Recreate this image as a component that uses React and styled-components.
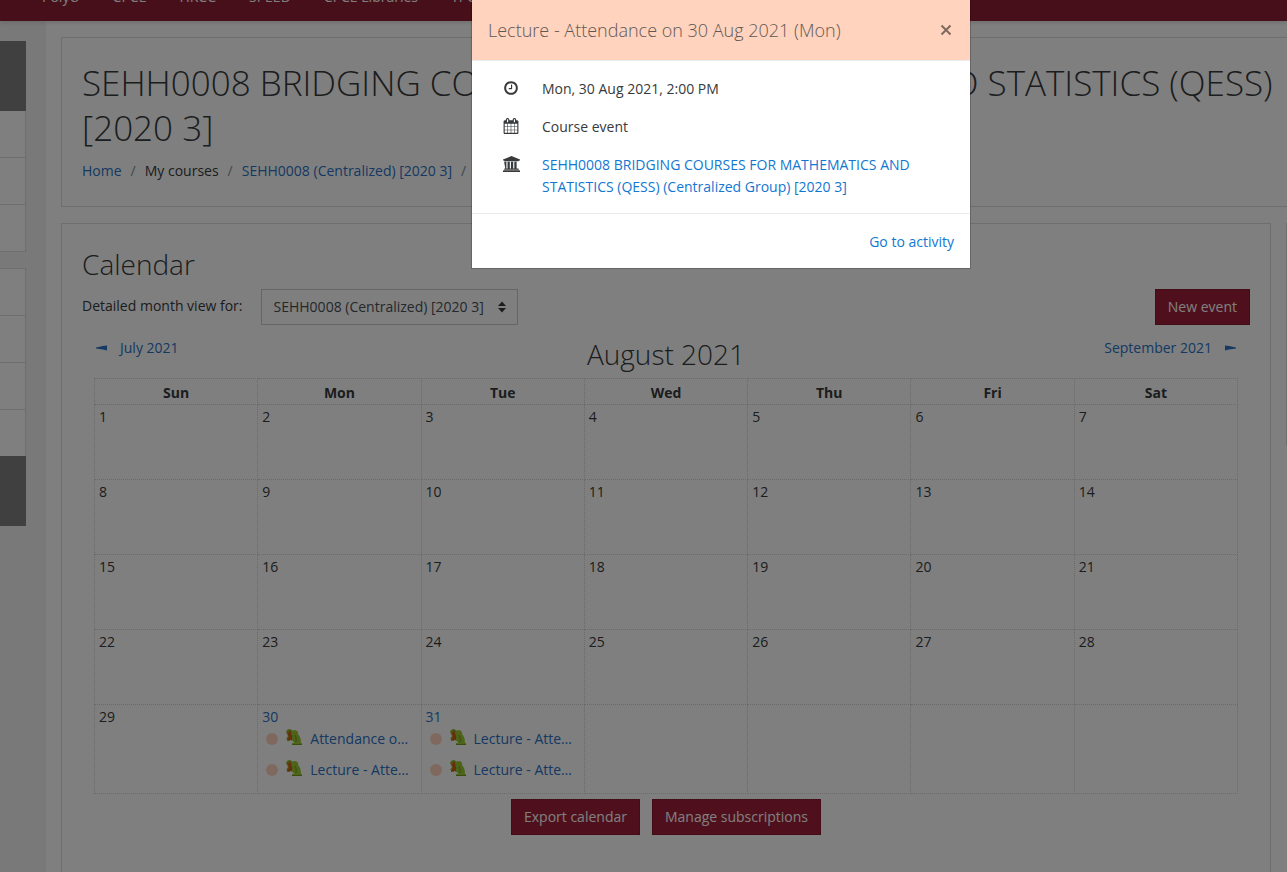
import React from 'react';
import styled, { createGlobalStyle } from 'styled-components';

const GlobalStyle = createGlobalStyle`
  * {
    box-sizing: border-box;
  }

  body {
    margin: 0;
    overflow-x: hidden;
    background-color: #ffffff;
    color: #373a3c;
    font-family: 'Open Sans', 'Segoe UI', sans-serif;
    font-size: 14px;
    line-height: 22px;
  }

  a {
    color: #1177d1;
    text-decoration: none;
  }
`;

const Page = styled.div`
  min-height: 100vh;
  display: flex;
  flex-direction: column;
  overflow: hidden;

  a {
    color: #2a72c4;
  }
`;

const Nav = styled.nav`
  height: 50px;
  margin-top: -29px;
  padding: 15px 0 0 42px;
  display: flex;
  flex-shrink: 0;
  gap: 33px;
  background-color: #8f1f35;
  box-shadow: 0 2px 4px rgba(0, 0, 0, 0.12);
  z-index: 1;

  a {
    color: white;
    white-space: nowrap;
  }
`;

const Layout = styled.div`
  flex: 1;
  display: flex;
`;

const Drawer = styled.aside`
  width: 46px;
  flex-shrink: 0;
  padding: 20px 20px 0 0;
  background-color: #f2f2f2;
`;

const DrawerItem = styled.li`
  height: ${(props) => (props.$active ? '70px' : '47px')};
  background-color: ${(props) => (props.$active ? '#808080' : '#ffffff')};
  border: 0 solid ${(props) => (props.$active ? '#808080' : '#dddddd')};
  border-right-width: 1px;
`;

const DrawerGroup = styled.ul`
  list-style: none;
  margin: 0 0 16px;
  padding: 0;

  ${DrawerItem} {
    border-${(props) => props.$lines}-width: 1px;
  }
`;

const Content = styled.div`
  flex: 1;
  min-width: 0;
  padding: 16px 0 0 15px;
  display: flex;
  flex-direction: column;
  gap: 16px;
`;

const Card = styled.section`
  border: 1px solid #dddddd;
  padding: 20px;
`;

/* runs on past the right edge, above the side blocks */
const HeaderCard = styled(Card)`
  width: calc(100% + 30px);
  height: 170px;
`;

const CourseTitle = styled.h1`
  margin: 2px 0 10px;
  font-size: 35px;
  line-height: 45px;
  font-weight: 300;
`;

const Breadcrumb = styled.ol`
  list-style: none;
  display: flex;
  margin: 0;
  padding: 0;
`;

const Crumb = styled.li`
  &::after {
    content: '/';
    padding: 0 9px;
    color: #868e96;
  }
`;

/* the side blocks hang over the right edge of the window */
const Columns = styled.div`
  flex: 1;
  display: flex;
  gap: 15px;
  margin-right: -239px;
`;

const CalendarCard = styled(Card)`
  flex: 1;
  min-width: 0;
  border-bottom: 0;
`;

const SideBlock = styled(Card)`
  width: 240px;
  height: 222px;
  flex-shrink: 0;
`;

const Heading = styled.h2`
  margin: 2px 0 7px;
  font-size: 28px;
  line-height: 36px;
  font-weight: 300;
`;

const Toolbar = styled.div`
  display: flex;
  align-items: center;
`;

const FilterLabel = styled.label`
  margin-right: 18px;
  padding-bottom: 2px;
`;

const SelectBox = styled.div`
  position: relative;
  margin-right: auto;

  svg {
    position: absolute;
    right: 12px;
    top: 12px;
    pointer-events: none;
  }
`;

const Select = styled.select`
  appearance: none;
  height: 36px;
  padding: 0 32px 0 12px;
  border: 1px solid #cccccc;
  border-radius: 0;
  background: #ffffff;
  color: #495057;
  font: inherit;
`;

const Button = styled.button`
  height: 36px;
  padding: 0 12px;
  border: 1px solid #861a2f;
  background-color: #a01f38;
  color: white;
  font: inherit;
`;

const Month = styled.div`
  padding: 0 12px;
`;

const MonthNav = styled.div`
  display: grid;
  grid-template-columns: 1fr auto 1fr;
  height: 53px;
  padding-top: 12px;
`;

const MonthLink = styled.a`
  display: flex;
  align-items: center;
  gap: 13px;
  height: 22px;
  padding: 0 2px;
  justify-self: ${(props) => (props.$end ? 'end' : 'start')};
`;

const MonthTitle = styled.h2`
  margin: 0;
  font-size: 28px;
  line-height: 34px;
  font-weight: 300;
`;

const Table = styled.table`
  width: 100%;
  table-layout: fixed;
  border-collapse: collapse;
`;

const DayName = styled.th`
  height: 26px;
  padding: 2px 0 0;
  border: 1px dotted #d4d4d4;
  font-weight: 700;
`;

const Day = styled.td`
  height: ${(props) => (props.$tall ? '89px' : '75px')};
  padding: 1px 4px;
  border: 1px dotted #d4d4d4;
  vertical-align: top;
`;

const EventList = styled.ul`
  list-style: none;
  margin: 0;
  padding: 0 4px;
`;

const Event = styled.li`
  height: 31px;
`;

const EventLink = styled.a`
  display: flex;
  align-items: center;
  gap: 8px;

  svg {
    flex-shrink: 0;
    margin-bottom: 4px;
  }
`;

const EventDot = styled.span`
  width: 12px;
  height: 12px;
  flex-shrink: 0;
  border-radius: 50%;
  background-color: #ffd3bd;
`;

const EventName = styled.span`
  overflow: hidden;
  text-overflow: ellipsis;
  white-space: nowrap;
`;

const Actions = styled.div`
  display: flex;
  justify-content: center;
  gap: 12px;
  padding: 5px 0 16px;
`;

const Backdrop = styled.div`
  position: fixed;
  inset: 0;
  z-index: 10;
  display: flex;
  justify-content: center;
  align-items: flex-start;
  padding-left: 155px;
  background-color: rgba(0, 0, 0, 0.5);
`;

const Modal = styled.div`
  width: 500px;
  border: 1px solid rgba(0, 0, 0, 0.2);
  border-top: 0;
  background-color: #ffffff;
  background-clip: padding-box;
`;

const ModalHeader = styled.header`
  height: 61px;
  padding: 0 16px;
  display: flex;
  align-items: center;
  justify-content: space-between;
  border-bottom: 1px solid #e9ecef;
  background-color: #ffd3bd;
`;

const ModalTitle = styled.h3`
  margin: 0;
  font-size: 18px;
  line-height: 28px;
  font-weight: 300;
  opacity: 0.8;
`;

const CloseButton = styled.button`
  display: flex;
  padding: 2px;
  border: 0;
  background: none;
  color: #7f695e;
`;

const ModalBody = styled.div`
  display: grid;
  gap: 16px;
  padding: 17px 16px 15px;
`;

const Detail = styled.div`
  display: grid;
  grid-template-columns: 46px 1fr;
  gap: 8px;

  svg {
    justify-self: center;
    margin-top: 2px;
  }
`;

const ModalFooter = styled.footer`
  display: flex;
  justify-content: flex-end;
  padding: 17px 16px 15px;
  border-top: 1px solid #e9ecef;
`;

const ClockIcon = () => (
  <svg width="16" height="16" viewBox="0 0 1792 1792" fill="currentColor">
    <path d="M1024 544v448q0 14-9 23t-23 9h-320q-14 0-23-9t-9-23v-64q0-14 9-23t23-9h224v-352q0-14 9-23t23-9h64q14 0 23 9t9 23zm416 352q0-148-73-273t-198-198-273-73-273 73-198 198-73 273 73 273 198 198 273 73 273-73 198-198 73-273zm224 0q0 209-103 385.5t-279.5 279.5-385.5 103-385.5-103-279.5-279.5-103-385.5 103-385.5 279.5-279.5 385.5-103 385.5 103 279.5 279.5 103 385.5z" />
  </svg>
);

const CalendarIcon = () => (
  <svg width="16" height="16" viewBox="0 0 1792 1792" fill="currentColor">
    <path d="M192 1664h288v-288h-288v288zm352 0h320v-288h-320v288zm-352-352h288v-320h-288v320zm352 0h320v-320h-320v320zm-352-384h288v-288h-288v288zm736 736h320v-288h-320v288zm-384-736h320v-288h-320v288zm768 736h288v-288h-288v288zm-384-352h320v-320h-320v320zm-352-864v-288q0-13-9.5-22.5t-22.5-9.5h-64q-13 0-22.5 9.5t-9.5 22.5v288q0 13 9.5 22.5t22.5 9.5h64q13 0 22.5-9.5t9.5-22.5zm736 864h288v-320h-288v320zm-384-384h320v-288h-320v288zm384 0h288v-288h-288v288zm32-480v-288q0-13-9.5-22.5t-22.5-9.5h-64q-13 0-22.5 9.5t-9.5 22.5v288q0 13 9.5 22.5t22.5 9.5h64q13 0 22.5-9.5t9.5-22.5zm384-64v1280q0 52-38 90t-90 38h-1408q-52 0-90-38t-38-90v-1280q0-52 38-90t90-38h128v-96q0-66 47-113t113-47h64q66 0 113 47t47 113v96h384v-96q0-66 47-113t113-47h64q66 0 113 47t47 113v96h128q52 0 90 38t38 90z" />
  </svg>
);

const CourseIcon = () => (
  <svg width="17" height="16" viewBox="-128 0 1920 1792" fill="currentColor">
    <path d="M832 0l960 384v128h-128q0 26-20.5 45t-48.5 19h-1526q-28 0-48.5-19t-20.5-45h-128v-128zM0 640h256v768h128v-768h256v768h128v-768h256v768h128v-768h256v768h128h59q28 0 48.5 19t20.5 45v64h-1664v-64q0-26 20.5-45t48.5-19h59zM1723 1600q28 0 48.5 19t20.5 45v128h-1920v-128q0-26 20.5-45t48.5-19z" />
  </svg>
);

const CloseIcon = () => (
  <svg width="12" height="12" viewBox="0 0 12 12" stroke="currentColor" strokeWidth="2">
    <path d="M1.5 1.5l9 9M10.5 1.5l-9 9" />
  </svg>
);

const SortIcon = () => (
  <svg width="8" height="12" viewBox="0 0 8 12" fill="#373a3c">
    <path d="M4 0.5L8 5H0zM4 11.5L8 7H0z" />
  </svg>
);

const PrevIcon = () => (
  <svg width="11" height="6" viewBox="0 0 11 6" fill="currentColor">
    <path d="M0 2.5L7 1L11 0.5V5.5L7 4.5L0 3.5z" />
  </svg>
);

const NextIcon = () => (
  <svg width="11" height="6" viewBox="0 0 11 6" fill="currentColor">
    <path d="M11 2.5L4 1L0 0.5V5.5L4 4.5L11 3.5z" />
  </svg>
);

const AttendanceIcon = () => (
  <svg width="16" height="16" viewBox="0 0 16 16">
    <path d="M0 3Q1 0 4 0Q7 1 7 4L8 11H4V12H1V10H0L2 7Z" fill="#8fb52b" />
    <path d="M3 2Q6 2 6 5L6 11L1 11Q4 8 2 5Z" fill="#d8581c" />
    <path d="M5 3Q6 1 9 1Q13 2 12 5Q15 8 15 14H16V16H6V14H8L7 12H5L7 8Q5 6 5 3Z" fill="#9cc832" />
    <path d="M9 6Q11 9 10 13M6 15.5H16" stroke="#6f9a22" fill="none" />
  </svg>
);

const navItems = ['PolyU', 'CPCE', 'HKCC', 'SPEED', 'CPCE Libraries', 'TPG'];
const dayNames = ['Sun', 'Mon', 'Tue', 'Wed', 'Thu', 'Fri', 'Sat'];
const weeks = [0, 1, 2, 3, 4].map((week) => dayNames.map((_, i) => week * 7 + i + 1));

const events = {
  30: ['Attendance on 30 Aug 2021', 'Lecture - Attendance on 30 Aug 2021'],
  31: ['Lecture - Attendance on 31 Aug 2021', 'Lecture - Attendance on 31 Aug 2021'],
};

function DayCell({ day }) {
  const dayEvents = events[day];

  if (day > 31) {
    return <Day $tall />;
  }
  return (
    <Day $tall={day > 28}>
      {dayEvents ? <a href="#day">{day}</a> : day}
      {dayEvents && (
        <EventList>
          {dayEvents.map((name, i) => (
            <Event key={i}>
              <EventLink href="#event">
                <EventDot />
                <AttendanceIcon />
                <EventName>{name}</EventName>
              </EventLink>
            </Event>
          ))}
        </EventList>
      )}
    </Day>
  );
}

function EventModal() {
  return (
    <Backdrop>
      <Modal role="dialog" aria-labelledby="event-title">
        <ModalHeader>
          <ModalTitle id="event-title">Lecture - Attendance on 30 Aug 2021 (Mon)</ModalTitle>
          <CloseButton type="button" aria-label="Close">
            <CloseIcon />
          </CloseButton>
        </ModalHeader>
        <ModalBody>
          <Detail>
            <ClockIcon />
            <span>Mon, 30 Aug 2021, 2:00 PM</span>
          </Detail>
          <Detail>
            <CalendarIcon />
            <span>Course event</span>
          </Detail>
          <Detail>
            <CourseIcon />
            <a href="#course">
              SEHH0008 BRIDGING COURSES FOR MATHEMATICS AND STATISTICS (QESS) (Centralized Group) [2020 3]
            </a>
          </Detail>
        </ModalBody>
        <ModalFooter>
          <a href="#activity">Go to activity</a>
        </ModalFooter>
      </Modal>
    </Backdrop>
  );
}

function App() {
  return (
    <>
      <GlobalStyle />
      <Page>
        <Nav>
          {navItems.map((item) => (
            <a key={item} href="#nav">{item}</a>
          ))}
        </Nav>
        <Layout>
          <Drawer>
            <DrawerGroup $lines="bottom">
              <DrawerItem $active />
              <DrawerItem />
              <DrawerItem />
              <DrawerItem />
            </DrawerGroup>
            <DrawerGroup $lines="top">
              <DrawerItem />
              <DrawerItem />
              <DrawerItem />
              <DrawerItem />
              <DrawerItem $active />
            </DrawerGroup>
          </Drawer>
          <Content>
            <HeaderCard as="header">
              <CourseTitle>
                SEHH0008 BRIDGING COURSES FOR MATHEMATICS AND STATISTICS (QESS) [2020 3]
              </CourseTitle>
              <Breadcrumb>
                <Crumb><a href="#home">Home</a></Crumb>
                <Crumb>My courses</Crumb>
                <Crumb><a href="#course">SEHH0008 (Centralized) [2020 3]</a></Crumb>
              </Breadcrumb>
            </HeaderCard>
            <Columns>
              <CalendarCard>
                <Heading>Calendar</Heading>
                <Toolbar>
                  <FilterLabel htmlFor="course">Detailed month view for:</FilterLabel>
                  <SelectBox>
                    <Select id="course">
                      <option>SEHH0008 (Centralized) [2020 3]</option>
                    </Select>
                    <SortIcon />
                  </SelectBox>
                  <Button type="button">New event</Button>
                </Toolbar>
                <Month>
                  <MonthNav>
                    <MonthLink href="#prev"><PrevIcon /> July 2021</MonthLink>
                    <MonthTitle>August 2021</MonthTitle>
                    <MonthLink href="#next" $end>September 2021 <NextIcon /></MonthLink>
                  </MonthNav>
                  <Table>
                    <thead>
                      <tr>
                        {dayNames.map((name) => (
                          <DayName key={name}>{name}</DayName>
                        ))}
                      </tr>
                    </thead>
                    <tbody>
                      {weeks.map((week) => (
                        <tr key={week[0]}>
                          {week.map((day) => (
                            <DayCell key={day} day={day} />
                          ))}
                        </tr>
                      ))}
                    </tbody>
                  </Table>
                </Month>
                <Actions>
                  <Button type="button">Export calendar</Button>
                  <Button type="button">Manage subscriptions</Button>
                </Actions>
              </CalendarCard>
              <SideBlock as="aside" />
            </Columns>
          </Content>
        </Layout>
      </Page>
      <EventModal />
    </>
  );
}

export default App;
